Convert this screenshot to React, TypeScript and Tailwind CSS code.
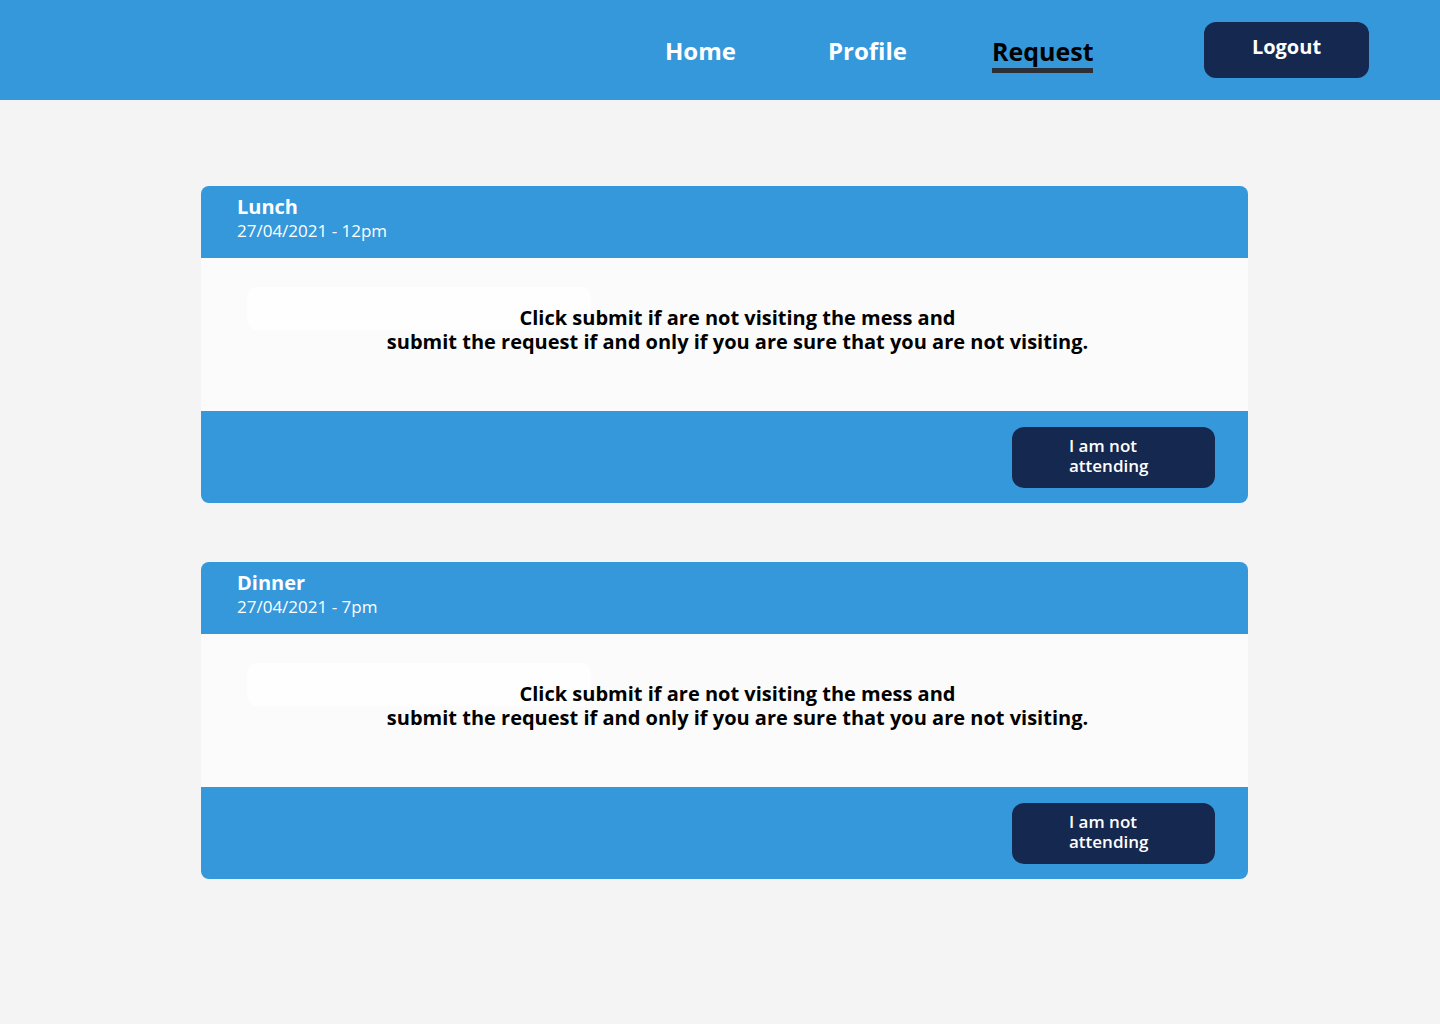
import React from "react";

// Meal request page: top nav + one card per meal with an opt-out button.

interface Meal {
  name: string;
  when: string;
}

const MEALS: Meal[] = [
  { name: "Lunch", when: "27/04/2021 - 12pm" },
  { name: "Dinner", when: "27/04/2021 - 7pm" },
];

const FONT = "font-['Open_Sans','Liberation_Sans',sans-serif]";

function NavLink({ label, active, className = "" }: { label: string; active?: boolean; className?: string }) {
  return (
    <a
      href="#"
      className={`relative text-[24px] font-bold leading-none ${active ? "text-black" : "text-white"} ${className}`}
    >
      {label}
      {active && <span className="absolute left-0 right-0 top-[29px] h-[5px] bg-[#2b3038]" />}
    </a>
  );
}

function MealCard({ meal }: { meal: Meal }) {
  return (
    <div className="overflow-hidden rounded-[8px]">
      <div className="flex h-[72px] flex-col bg-[#3598db] pl-[36px] pt-[9px] text-white">
        <div className="text-[20px] font-bold leading-[24px]">{meal.name}</div>
        <div className="text-[17px] font-medium leading-[24px]">{meal.when}</div>
      </div>
      <div className="relative h-[153px] bg-[#fbfbfb] pt-[48px]">
        <div className="absolute left-[46px] top-[29px] h-[43px] w-[344px] rounded-[10px] bg-[#fefefe]" />
        <p className="relative pl-[26px] text-center text-[20px] font-bold leading-[24px] text-black">
          Click submit if are not visiting the mess and
          <br />
          submit the request if and only if you are sure that you are not visiting.
        </p>
      </div>
      <div className="flex h-[92px] items-center justify-end bg-[#3598db] pr-[33px]">
        <button className="flex h-[61px] w-[203px] items-center rounded-[12px] bg-[#15284f] pb-[2px] pl-[57px] text-left text-[17px] font-semibold leading-[20px] text-white">
          I am not
          <br />
          attending
        </button>
      </div>
    </div>
  );
}

export default function App() {
  return (
    <div className={`min-h-[1024px] bg-[#f4f4f4] ${FONT}`}>
      <header className="flex h-[100px] items-center bg-[#3598db]">
        <nav className="ml-[665px] flex items-center pt-[2px]">
          <NavLink label="Home" />
          <NavLink label="Profile" className="ml-[92px]" />
          <NavLink label="Request" active className="ml-[85px] text-[25px]" />
        </nav>
        <button className="ml-auto mr-[71px] h-[56px] w-[165px] rounded-[12px] bg-[#15284f] pb-[6px] text-[20px] font-bold text-white">
          Logout
        </button>
      </header>
      <main className="ml-[201px] flex w-[1047px] flex-col gap-[59px] pt-[86px]">
        {MEALS.map((m) => (
          <MealCard key={m.name} meal={m} />
        ))}
      </main>
    </div>
  );
}
